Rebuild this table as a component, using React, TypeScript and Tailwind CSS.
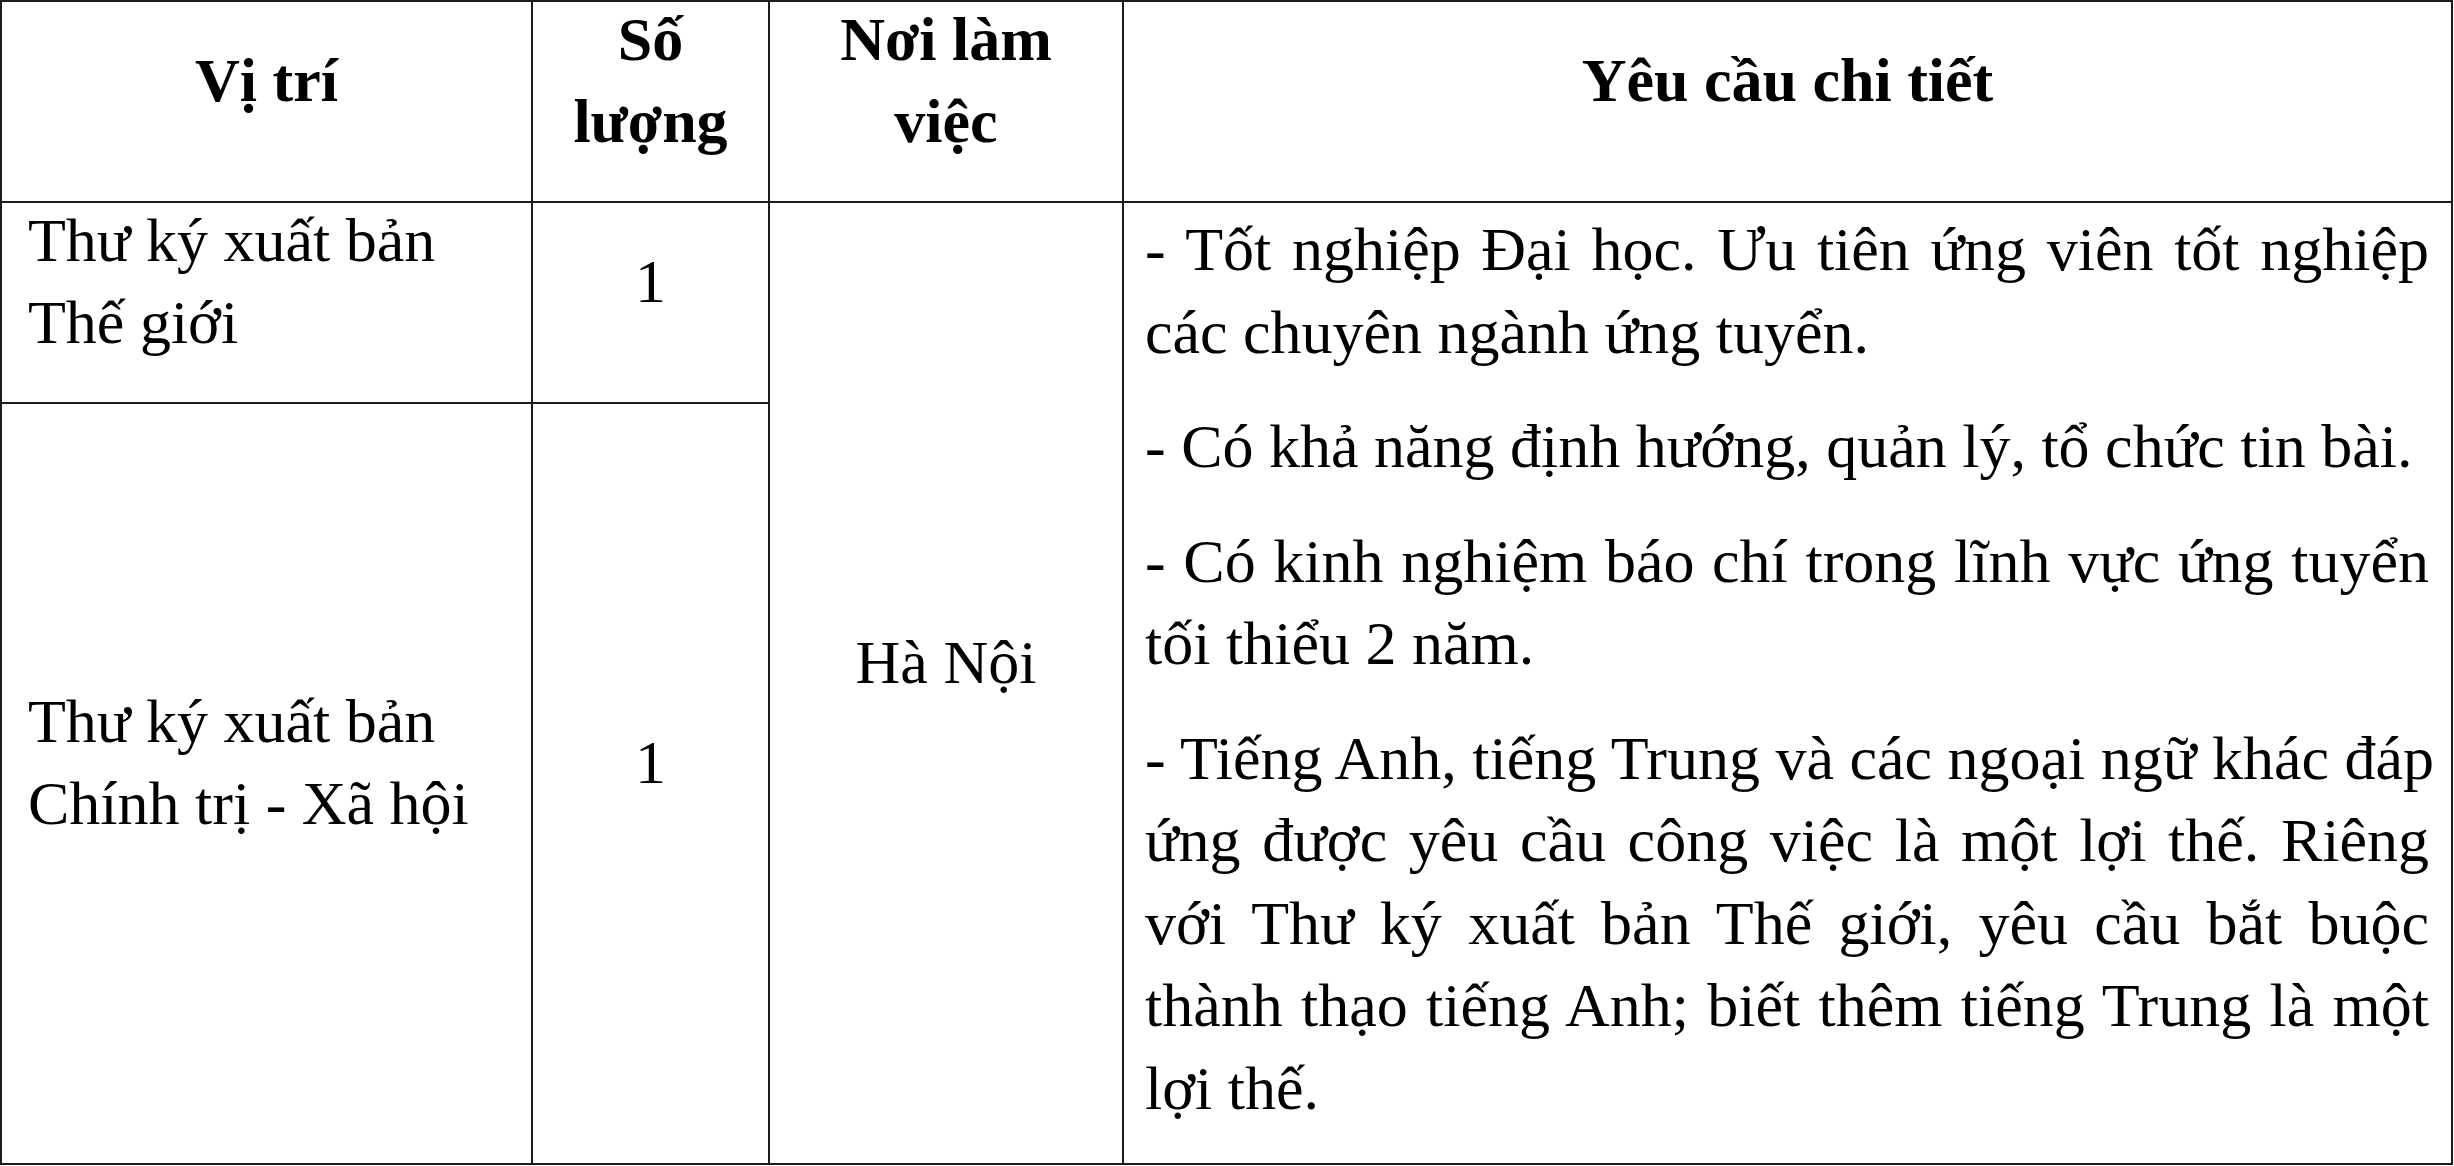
import React from "react";

const font = { fontFamily: '"Liberation Serif", "Times New Roman", serif' };

// each paragraph split into its printed lines so the wrap matches the original
const requirements: string[][] = [
  ["- Tốt nghiệp Đại học. Ưu tiên ứng viên tốt nghiệp", "các chuyên ngành ứng tuyển."],
  ["- Có khả năng định hướng, quản lý, tổ chức tin bài."],
  ["- Có kinh nghiệm báo chí trong lĩnh vực ứng tuyển", "tối thiểu 2 năm."],
  [
    "- Tiếng Anh, tiếng Trung và các ngoại ngữ khác đáp",
    "ứng được yêu cầu công việc là một lợi thế. Riêng",
    "với Thư ký xuất bản Thế giới, yêu cầu bắt buộc",
    "thành thạo tiếng Anh; biết thêm tiếng Trung là một",
    "lợi thế.",
  ],
];

const cell = "border-r-2 border-b-2 border-[#1c1c1c] flex items-center pb-[43px] px-[26px]";

const App: React.FC = () => {
  return (
    <div className="bg-white text-black w-[2454px] h-[1166px]" style={font}>
      <div className="grid grid-cols-[531px_237px_354px_1329px] grid-rows-[201px_201px_761px] border-l-2 border-t-2 border-[#1c1c1c] w-[2453px] text-[62px] leading-[82px]">
        {/* header */}
        <div className={`${cell} justify-center text-center font-bold`}>Vị trí</div>
        <div className={`${cell} justify-center text-center font-bold`}>Số lượng</div>
        <div className={`${cell} justify-center text-center font-bold`}>Nơi làm việc</div>
        <div className={`${cell} justify-center text-center font-bold`}>Yêu cầu chi tiết</div>

        {/* row 1 */}
        <div className={cell}>Thư ký xuất bản Thế giới</div>
        <div className={`${cell} justify-center`}>1</div>
        <div className={`${cell} row-span-2 justify-center`}>Hà Nội</div>
        <div className="row-span-2 border-r-2 border-b-2 border-[#1c1c1c] pl-[21px] pr-[22px] pt-[5px] leading-[82.5px]">
          {requirements.map((lines, i) => (
            <div key={i} className="mb-[32px]">
              {lines.map((line, j) =>
                j < lines.length - 1 ? (
                  <span key={j} className="block whitespace-nowrap text-justify [text-align-last:justify]">
                    {line}
                  </span>
                ) : (
                  <span key={j} className="block whitespace-nowrap">
                    {line}
                  </span>
                )
              )}
            </div>
          ))}
        </div>

        {/* row 2 */}
        <div className={cell}>Thư ký xuất bản Chính trị - Xã hội</div>
        <div className={`${cell} justify-center`}>1</div>
      </div>
    </div>
  );
};

export default App;
